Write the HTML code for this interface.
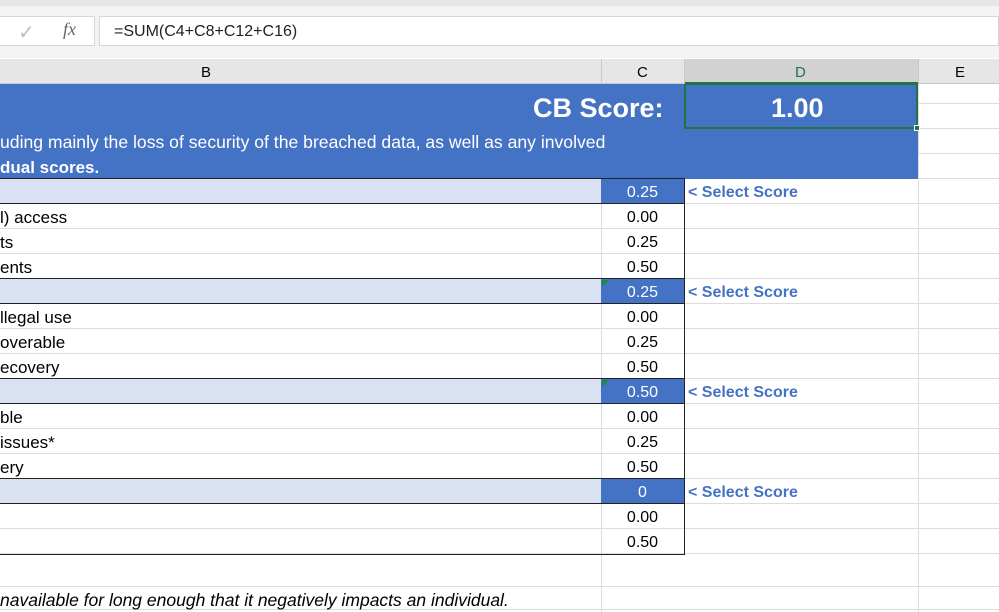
<!DOCTYPE html><html><head><style>
body{margin:0;width:999px;height:612px;overflow:hidden;background:#fff;font-family:"Liberation Sans",sans-serif;position:relative}
div{position:absolute;box-sizing:border-box}
.t{font-size:15px;white-space:nowrap;line-height:25px}
.hl{height:1px;background:#dcdcdc;left:0;width:999px}
.vl{width:1px;background:#dcdcdc}
</style></head><body>
<div style="left:0;top:0;width:999px;height:58px;background:#f3f3f3"></div>
<div style="left:0;top:0;width:999px;height:6px;background:#e6e6e6"></div>
<div style="left:0;top:16px;width:95px;height:30px;background:#fff;border:1px solid #d6d6d6;border-left:none"></div>
<div style="left:18px;top:20px;font-size:20px;color:#bdbdbd">✓</div>
<div style="left:63px;top:19px;font-size:18px;font-style:italic;font-family:'Liberation Serif',serif;color:#666">fx</div>
<div style="left:99px;top:16px;width:900px;height:30px;background:#fff;border:1px solid #d6d6d6"></div>
<div class="t" style="left:114px;top:19px;font-size:16px;color:#222">=SUM(C4+C8+C12+C16)</div>
<div style="left:0;top:59px;width:999px;height:25px;background:#e6e6e6;border-bottom:1px solid #c8c8c8"></div>
<div style="left:684px;top:59px;width:234px;height:25px;background:#d2d2d2;border-bottom:2px solid #217346"></div>
<div class="vl" style="left:601px;top:59px;height:25px;background:#c8c8c8"></div>
<div class="vl" style="left:684px;top:59px;height:25px;background:#c8c8c8"></div>
<div class="vl" style="left:918px;top:59px;height:25px;background:#c8c8c8"></div>
<div class="t" style="left:201px;top:60px;font-size:15px">B</div>
<div class="t" style="left:637px;top:60px;font-size:15px">C</div>
<div class="t" style="left:795px;top:60px;font-size:15px;color:#217346">D</div>
<div class="t" style="left:955px;top:60px;font-size:15px">E</div>
<div class="vl" style="left:601px;top:179px;height:433px"></div>
<div class="vl" style="left:918px;top:84px;height:528px"></div>
<div class="hl" style="top:103px;left:918px;width:81px"></div>
<div class="hl" style="top:128px;left:918px;width:81px"></div>
<div class="hl" style="top:153px;left:918px;width:81px"></div>
<div class="hl" style="top:203px"></div><div class="hl" style="top:228px"></div><div class="hl" style="top:253px"></div>
<div class="hl" style="top:303px"></div><div class="hl" style="top:328px"></div><div class="hl" style="top:353px"></div>
<div class="hl" style="top:403px"></div><div class="hl" style="top:428px"></div><div class="hl" style="top:453px"></div>
<div class="hl" style="top:503px"></div><div class="hl" style="top:528px"></div><div class="hl" style="top:553px"></div>
<div class="hl" style="top:178px"></div><div class="hl" style="top:278px"></div><div class="hl" style="top:378px"></div><div class="hl" style="top:478px"></div>
<div class="hl" style="top:586px"></div><div class="hl" style="top:609px"></div>
<div style="left:0;top:84px;width:918px;height:95px;background:#4472c4"></div>
<div style="left:684px;top:84px;width:234px;height:45px;border:2px solid #217346;border-top:1px solid #217346"></div>
<div style="left:914px;top:125px;width:6px;height:6px;background:#217346;border:1px solid #fff"></div>
<div class="t" style="left:533px;top:93px;font-size:27px;font-weight:bold;color:#fff;line-height:30px">CB Score:</div>
<div class="t" style="left:771px;top:93px;font-size:27px;font-weight:bold;color:#fff;line-height:30px">1.00</div>
<div class="t" style="left:0;top:130px;color:#fff;font-size:17.6px">uding mainly the loss of security of the breached data, as well as any involved</div>
<div class="t" style="left:0;top:155px;color:#fff;font-size:17px;font-weight:bold">dual scores.</div>
<div style="left:0;top:179px;width:601px;height:25px;background:#d9e1f2"></div>
<div style="left:0;top:279px;width:601px;height:25px;background:#d9e1f2"></div>
<div style="left:0;top:379px;width:601px;height:25px;background:#d9e1f2"></div>
<div style="left:0;top:479px;width:601px;height:25px;background:#d9e1f2"></div>
<div style="left:601px;top:179px;width:83px;height:25px;background:#4472c4"></div>
<div style="left:601px;top:279px;width:83px;height:25px;background:#4472c4"></div>
<div style="left:601px;top:379px;width:83px;height:25px;background:#4472c4"></div>
<div style="left:601px;top:479px;width:83px;height:25px;background:#4472c4"></div>
<div style="left:602px;top:280px;width:0;height:0;border-top:7px solid #1e8a3c;border-right:7px solid transparent"></div>
<div style="left:602px;top:380px;width:0;height:0;border-top:7px solid #1e8a3c;border-right:7px solid transparent"></div>
<div style="left:-2px;top:178px;width:687px;height:377px;border:1px solid #222"></div>
<div style="left:0;top:203px;width:685px;height:1px;background:#222"></div>
<div style="left:0;top:278px;width:685px;height:1px;background:#222"></div>
<div style="left:0;top:303px;width:685px;height:1px;background:#222"></div>
<div style="left:0;top:378px;width:685px;height:1px;background:#222"></div>
<div style="left:0;top:403px;width:685px;height:1px;background:#222"></div>
<div style="left:0;top:478px;width:685px;height:1px;background:#222"></div>
<div style="left:0;top:503px;width:685px;height:1px;background:#222"></div>
<div class="t" style="left:0;top:205px;font-size:17px">l) access</div>
<div class="t" style="left:0;top:230px;font-size:17px">ts</div>
<div class="t" style="left:0;top:255px;font-size:17px">ents</div>
<div class="t" style="left:0;top:305px;font-size:17px">llegal use</div>
<div class="t" style="left:0;top:330px;font-size:17px">overable</div>
<div class="t" style="left:0;top:355px;font-size:17px">ecovery</div>
<div class="t" style="left:0;top:405px;font-size:17px">ble</div>
<div class="t" style="left:0;top:430px;font-size:17px">issues*</div>
<div class="t" style="left:0;top:455px;font-size:17px">ery</div>
<div class="t" style="left:0;top:588px;font-size:17.5px;font-style:italic;line-height:24px">navailable for long enough that it negatively impacts an individual.</div>
<div style="left:601px;top:180px;width:83px;font-size:16px;line-height:25px;text-align:center">
<div style="position:static;color:#fff">0.25</div><div style="position:static">0.00</div><div style="position:static">0.25</div><div style="position:static">0.50</div>
<div style="position:static;color:#fff">0.25</div><div style="position:static">0.00</div><div style="position:static">0.25</div><div style="position:static">0.50</div>
<div style="position:static;color:#fff">0.50</div><div style="position:static">0.00</div><div style="position:static">0.25</div><div style="position:static">0.50</div>
<div style="position:static;color:#fff">0</div><div style="position:static">0.00</div><div style="position:static">0.50</div></div>
<div class="t" style="left:688px;top:180px;font-size:16px;font-weight:bold;color:#4472c4">&lt; Select Score</div>
<div class="t" style="left:688px;top:280px;font-size:16px;font-weight:bold;color:#4472c4">&lt; Select Score</div>
<div class="t" style="left:688px;top:380px;font-size:16px;font-weight:bold;color:#4472c4">&lt; Select Score</div>
<div class="t" style="left:688px;top:480px;font-size:16px;font-weight:bold;color:#4472c4">&lt; Select Score</div>
</body></html>
